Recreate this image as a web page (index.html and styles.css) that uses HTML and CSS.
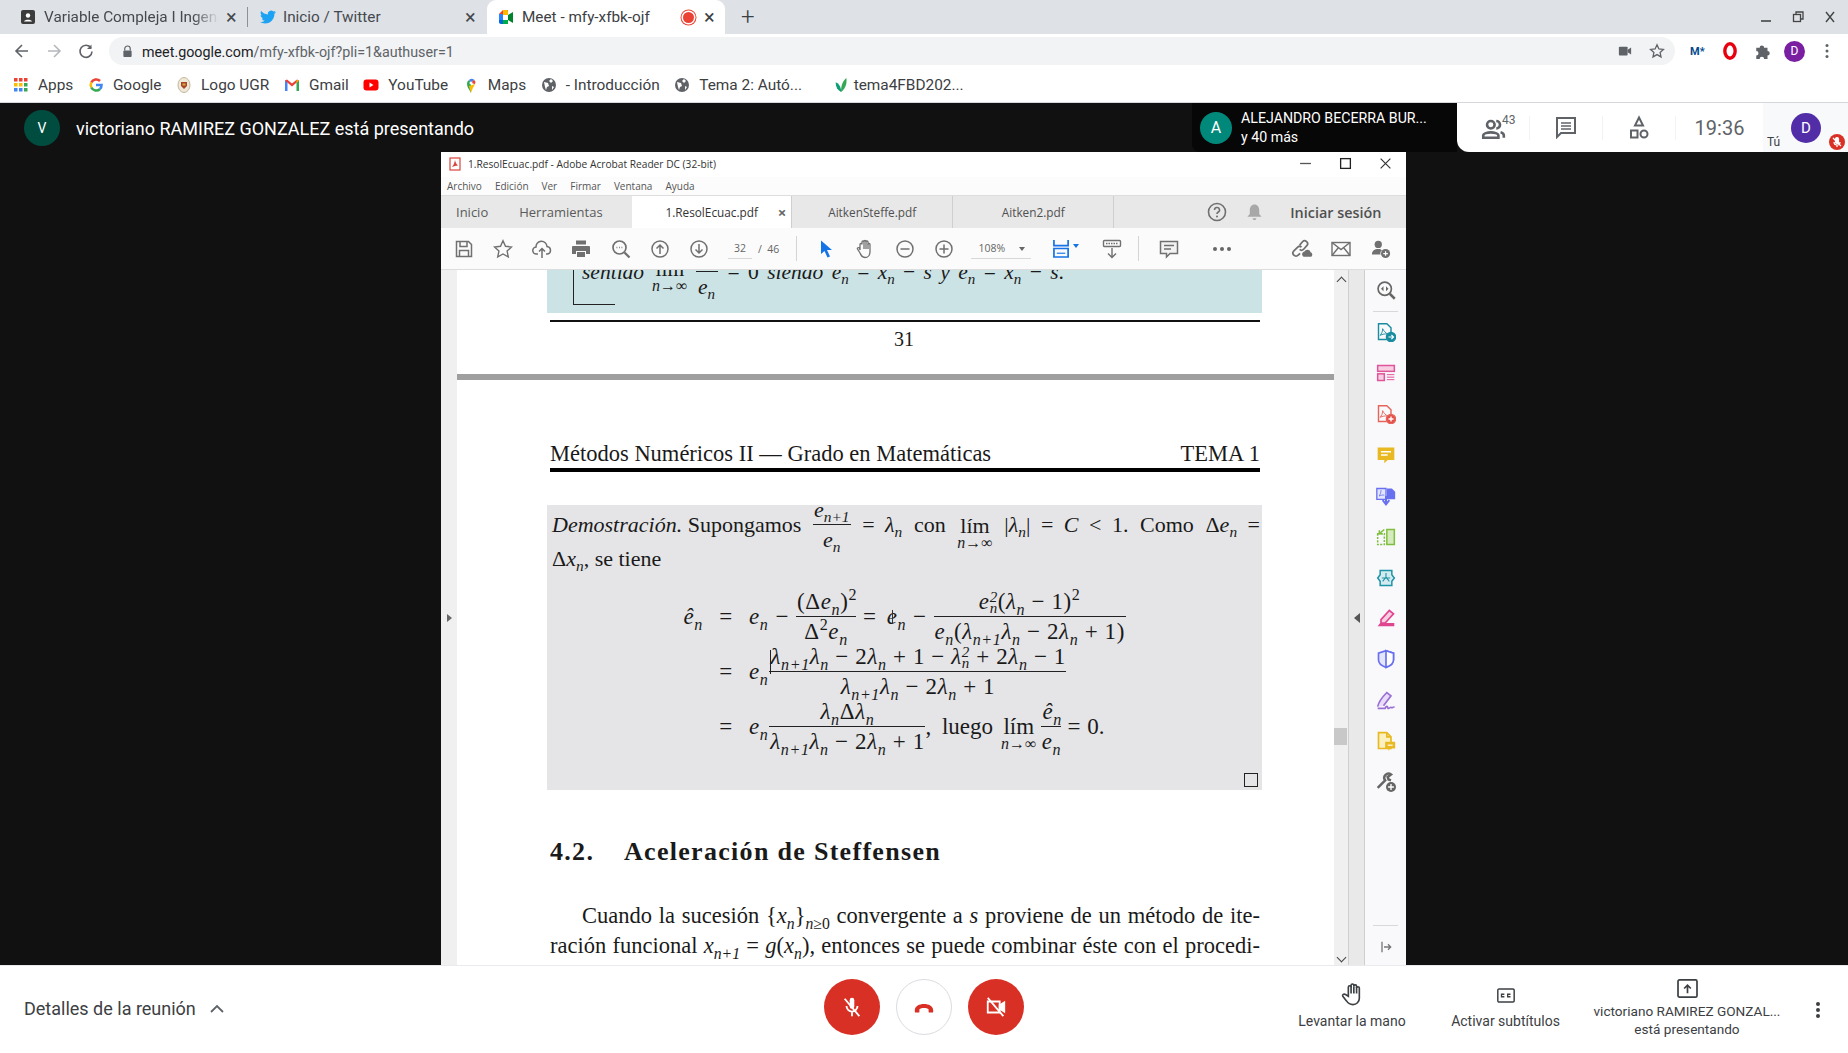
FILE: index.html
```html
<!DOCTYPE html>
<html>
<head>
<meta charset="utf-8">
<title>Meet - mfy-xfbk-ojf</title>
<link rel="stylesheet" href="styles.css">
</head>
<body>

<!-- chrome tabs -->
<div class="tabstrip">
  <div class="tab tab1">
    <svg class="fav" viewBox="0 0 16 16"><rect x="1" y="1" width="14" height="14" rx="2" fill="#3c3c3c"/><circle cx="8" cy="6.5" r="2.2" fill="#fff"/><path d="M4 12.5c.5-2.5 7.5-2.5 8 0z" fill="#fff"/></svg>
    <span class="tab-title fade">Variable Compleja I Ingeni</span>
    <span class="tab-x">×</span>
  </div>
  <div class="tab-sep"></div>
  <div class="tab tab2">
    <svg class="fav" viewBox="0 0 24 24"><path fill="#1da1f2" d="M23.95 4.57a10 10 0 0 1-2.82.77 4.96 4.96 0 0 0 2.16-2.72c-.95.55-2 .95-3.12 1.17a4.92 4.92 0 0 0-8.38 4.48C7.69 8.1 4.07 6.13 1.64 3.16a4.82 4.82 0 0 0-.67 2.48c0 1.71.87 3.2 2.18 4.09a4.9 4.9 0 0 1-2.23-.61v.06c0 2.39 1.7 4.38 3.95 4.83a5 5 0 0 1-2.21.08 4.94 4.94 0 0 0 4.6 3.42A9.87 9.87 0 0 1 0 19.54a14 14 0 0 0 7.56 2.21c9.05 0 14-7.5 14-13.98 0-.21 0-.42-.02-.63A9.94 9.94 0 0 0 24 4.59z"/></svg>
    <span class="tab-title">Inicio / Twitter</span>
    <span class="tab-x">×</span>
  </div>
  <div class="tab tab3">
    <svg class="fav" viewBox="0 0 16 16"><path d="M1 5l4-4h5v5H1z" fill="#ea4335"/><path d="M1 5h4v6H1z" fill="#2684fc"/><path d="M1 11h4v4H3a2 2 0 0 1-2-2z" fill="#0066da"/><path d="M5 11h5v4H5z" fill="#00ac47"/><path d="M5 1h4a1 1 0 0 1 1 1v4H5z" fill="#ffba00"/><path d="M10 6v5l5 3V3z" fill="#00832d"/></svg>
    <span class="tab-title dark">Meet - mfy-xfbk-ojf</span>
    <span class="rec"></span>
    <span class="tab-x dark">×</span>
  </div>
  <span class="tab-plus">+</span>
  <div class="win-btns">
    <svg viewBox="0 0 12 12"><path d="M1 10h10" stroke="#444" stroke-width="1.6"/></svg>
    <svg viewBox="0 0 12 12" fill="none" stroke="#444" stroke-width="1.3"><path d="M4 3V1h7v7H9"/><rect x="1.5" y="3.5" width="7" height="7"/></svg>
    <svg viewBox="0 0 12 12"><path d="M2 1l8 10M10 1L2 11" stroke="#444" stroke-width="1.4"/></svg>
  </div>
</div>

<!-- address bar -->
<div class="addressrow">
  <svg class="nav" viewBox="0 0 16 16" fill="none" stroke="#5f6368" stroke-width="1.6"><path d="M14 8H2.5M8 2L2 8l6 6"/></svg>
  <svg class="nav" viewBox="0 0 16 16" fill="none" stroke="#b5b8bc" stroke-width="1.6"><path d="M2 8h11.5M8 2l6 6-6 6"/></svg>
  <svg class="nav" viewBox="0 0 16 16" fill="none" stroke="#5f6368" stroke-width="1.6"><path d="M13 5a6 6 0 1 0 1 3.5"/><path d="M13.5 1.5V6H9" fill="#5f6368" stroke="none"/></svg>
  <div class="omnibox">
    <svg class="lock" viewBox="0 0 12 14"><path d="M3 6V4a3 3 0 0 1 6 0v2" fill="none" stroke="#5f6368" stroke-width="1.3"/><rect x="1.5" y="6" width="9" height="7" rx="1" fill="#5f6368"/></svg>
    <span class="url"><b>meet.google.com</b>/mfy-xfbk-ojf?pli=1&amp;authuser=1</span>
    <svg class="omni-cam" viewBox="0 0 16 12"><rect x="1" y="1" width="10" height="10" rx="1" fill="#5f6368"/><path d="M11 4.5l4-2.5v8l-4-2.5z" fill="#5f6368"/></svg>
    <svg class="omni-star" viewBox="0 0 16 16"><path d="M8 1.8l1.900 4.100 4.500.5-3.300 3 .9 4.500L8 11.600l-4 2.300.9-4.500-3.300-3 4.500-.5z" fill="none" stroke="#5f6368" stroke-width="1.3"/></svg>
  </div>
  <div class="exts">
    <span class="ext-m">M*</span>
    <svg class="ext" viewBox="0 0 16 16"><ellipse cx="8" cy="8" rx="4.6" ry="6.4" fill="none" stroke="#e8000f" stroke-width="3"/></svg>
    <svg class="ext" viewBox="0 0 16 16"><path d="M2 5h3a2 2 0 1 1 4 0h3v3a2 2 0 1 1 0 4v3H9a2 2 0 1 0-4 0H2v-3a2 2 0 1 0 0-4z" fill="#5f6368"/></svg>
    <span class="avatar-d">D</span>
    <svg class="ext kebab" viewBox="0 0 4 16"><circle cx="2" cy="2.5" r="1.5" fill="#5f6368"/><circle cx="2" cy="8" r="1.5" fill="#5f6368"/><circle cx="2" cy="13.5" r="1.5" fill="#5f6368"/></svg>
  </div>
</div>

<!-- bookmarks -->
<div class="bookmarks">
  <div class="bm">
    <svg class="bm-ico" viewBox="0 0 16 16"><g fill="#ea4335"><rect x="1" y="1" width="3.5" height="3.5"/><rect x="6" y="1" width="3.5" height="3.5"/><rect x="11" y="1" width="3.5" height="3.5"/></g><g fill="#fbbc05"><rect x="1" y="6" width="3.5" height="3.5"/><rect x="6" y="6" width="3.5" height="3.5"/></g><rect x="11" y="6" width="3.5" height="3.5" fill="#34a853"/><g fill="#4285f4"><rect x="1" y="11" width="3.5" height="3.5"/><rect x="6" y="11" width="3.5" height="3.5"/></g><rect x="11" y="11" width="3.5" height="3.5" fill="#34a853"/></svg>
    Apps
  </div>
  <div class="bm">
    <svg class="bm-ico" viewBox="0 0 16 16" fill="none" stroke-width="2.6"><path d="M3.3 5.500A5.500 5.500 0 0 1 12 4" stroke="#ea4335"/><path d="M3.3 5.500a5.500 5.500 0 0 0 0 5" stroke="#fbbc05"/><path d="M3.3 10.500A5.500 5.500 0 0 0 12 12" stroke="#34a853"/><path d="M12 12c1.200-1 1.500-2.500 1.500-4H8" stroke="#4285f4"/></svg>
    Google
  </div>
  <div class="bm">
    <svg class="bm-ico" viewBox="0 0 16 16"><ellipse cx="8" cy="8" rx="6" ry="7.5" fill="#eee8d8" stroke="#c4b898"/><path d="M5 5h6v4l-3 3-3-3z" fill="#a8442e"/><path d="M6.5 6.5h3v2h-3z" fill="#d9a93a"/></svg>
    Logo UGR
  </div>
  <div class="bm">
    <svg class="bm-ico" viewBox="0 0 16 16"><path d="M1 14V3.5L3.5 3V14z" fill="#4285f4"/><path d="M12.5 14V3l2.5.5V14z" fill="#34a853"/><path d="M1 3.5l2-1 5 4 5-4 2 1-7 6z" fill="#ea4335"/><path d="M15 3.5L12.5 6V3z" fill="#fbbc05"/></svg>
    Gmail
  </div>
  <div class="bm">
    <svg class="bm-ico" viewBox="0 0 16 16"><rect x="0.5" y="2.5" width="15" height="11" rx="3" fill="#f00"/><path d="M6.5 5.500v5l4-2.500z" fill="#fff"/></svg>
    YouTube
  </div>
  <div class="bm">
    <svg class="bm-ico" viewBox="0 0 16 16"><path d="M8 16c-1-3-4-5-4-9.500a4 4 0 0 1 2-3.500l2 3z" fill="#34a853"/><path d="M6 3a4.200 4.200 0 0 1 5-.5L8 6z" fill="#4285f4"/><path d="M11 2.500A4.200 4.200 0 0 1 12 7L8 6z" fill="#ea4335"/><path d="M12 7c-.2 1-2.500 4-4 9l-2-7z" fill="#fbbc05"/><circle cx="8" cy="6" r="1.5" fill="#fff"/></svg>
    Maps
  </div>
  <div class="bm">
    <svg class="bm-ico" viewBox="0 0 16 16"><circle cx="8" cy="8" r="7" fill="#5f6368"/><path d="M3 5l4 1 1 3-2 1-1 3-1-3zM10 2l2 2-2 2-2-2zM11 9l2 1-2 3z" fill="#fff"/></svg>
    - Introducción
  </div>
  <div class="bm">
    <svg class="bm-ico" viewBox="0 0 16 16"><circle cx="8" cy="8" r="7" fill="#5f6368"/><path d="M3 5l4 1 1 3-2 1-1 3-1-3zM10 2l2 2-2 2-2-2zM11 9l2 1-2 3z" fill="#fff"/></svg>
    Tema 2: Autó...
  </div>
  <div class="bm bm-last">
    <svg class="bm-ico" viewBox="0 0 16 18"><path d="M8 17C4 15 2 11 2 6c3 1 5 4 6 8z" fill="#0f9d77"/><path d="M8 17c0-6 1-12 6-16 1 6-1 12-6 16z" fill="#34a853"/></svg>
    tema4FBD202...
  </div>
</div>

<!-- meet top bar -->
<div class="meetbar">
  <span class="avatar-v">V</span>
  <span class="presenting">victoriano RAMIREZ GONZALEZ está presentando</span>
  <div class="speaker">
    <span class="avatar-a">A</span>
    <div class="speaker-names">
      <span>ALEJANDRO BECERRA BUR...</span>
      <span>y 40 más</span>
    </div>
  </div>
  <div class="meetpanel">
    <div class="mp-cell mp-people">
      <svg viewBox="0 0 24 20" fill="none" stroke="#5f6368" stroke-width="2.4"><circle cx="10" cy="7" r="3.5"/><path d="M3 19v-2c0-2 4-3 7-3s7 1 7 3v2z"/><path d="M15 3.500a3.500 3.500 0 0 1 0 7M19 14c2 .5 3 1.500 3 3v2"/></svg>
      <span class="mp-count">43</span>
    </div>
    <div class="mp-cell mp-chat">
      <svg viewBox="0 0 20 22" fill="none" stroke="#5f6368" stroke-width="2"><path d="M1 1h18v15H5l-4 4z"/><path d="M5 6h10M5 9h10M5 12h10" stroke-width="1.6"/></svg>
    </div>
    <div class="mp-cell mp-shapes">
      <svg viewBox="0 0 20 24" fill="none" stroke="#5f6368" stroke-width="2"><path d="M10 2l4 8H6z"/><rect x="2" y="15" width="6.5" height="7"/><circle cx="15" cy="18.5" r="3.5"/></svg>
    </div>
    <div class="mp-time">19:36</div>
    <div class="mp-self">
      <span class="tu">Tú</span>
      <span class="avatar-self">D</span>
      <span class="mic-badge">
        <svg viewBox="0 0 12 12" fill="none" stroke="#fff" stroke-width="1.2"><rect x="4.5" y="1.5" width="3" height="6" rx="1.5" fill="#fff"/><path d="M3 6a3 3 0 0 0 6 0M6 9v2M2 2l8 8"/></svg>
      </span>
    </div>
  </div>
</div>

<!-- shared window -->
<div class="stage">
  <div class="acro">
    <div class="acro-title">
      <svg class="pdf-ico" viewBox="0 0 12 14"><rect x="1" y="1" width="10" height="12" fill="#fff" stroke="#d9453c" stroke-width="1.2"/><path d="M6 3c-.5 3-1.500 5-3 7 2-1 4-1.500 6-1.500C7.500 7.500 6.500 5.500 6 3z" fill="#d9453c"/></svg>
      <span>1.ResolEcuac.pdf - Adobe Acrobat Reader DC (32-bit)</span>
      <div class="acro-winbtns">
        <svg viewBox="0 0 12 12"><path d="M1 6h10" stroke="#555" stroke-width="1.2"/></svg>
        <svg viewBox="0 0 12 12"><rect x="1.5" y="1.5" width="9" height="9" fill="none" stroke="#222" stroke-width="1.2"/></svg>
        <svg viewBox="0 0 12 12"><path d="M1.5 1.500l9 9M10.500 1.500l-9 9" stroke="#333" stroke-width="1.1"/></svg>
      </div>
    </div>
    <div class="acro-menu">
      <span>Archivo</span><span>Edición</span><span>Ver</span><span>Firmar</span><span>Ventana</span><span>Ayuda</span>
    </div>
    <div class="acro-tabs">
      <span class="at-link at-home">Inicio</span>
      <span class="at-link at-tools">Herramientas</span>
      <div class="at-tab at-active">1.ResolEcuac.pdf<span class="at-x">×</span></div>
      <div class="at-tab">AitkenSteffe.pdf</div>
      <div class="at-tab">Aitken2.pdf</div>
      <svg class="at-help" viewBox="0 0 20 20"><circle cx="10" cy="10" r="8.5" fill="none" stroke="#707070" stroke-width="1.6"/><path d="M7.5 8a2.500 2.500 0 1 1 3.500 2.300c-.7.4-1 .8-1 1.700" fill="none" stroke="#707070" stroke-width="1.6"/><circle cx="10" cy="14.5" r="1" fill="#707070"/></svg>
      <svg class="at-bell" viewBox="0 0 18 20"><path d="M9 1.500c-3 0-5 2.500-5 6v4l-2.500 3h15L14 11.500v-4c0-3.500-2-6-5-6zM7 16h4a2 2 0 0 1-4 0z" fill="#a8a8a8"/></svg>
      <span class="at-login">Iniciar sesión</span>
    </div>
    <div class="acro-tools">
      <svg class="tb" viewBox="0 0 20 20" fill="none" stroke="#707070" stroke-width="1.5"><path d="M2.5 2.500h12l3 3v12h-15z"/><path d="M6 2.500v5h7v-5M5.500 17.500v-6h9v6"/></svg>
      <svg class="tb" viewBox="0 0 20 20" fill="none" stroke="#707070" stroke-width="1.4"><path d="M10 1.800l2.500 5.500 6 .7-4.400 4.100 1.200 5.900-5.300-3-5.300 3 1.200-5.900L1.500 8l6-.7z"/></svg>
      <svg class="tb" viewBox="0 0 20 20" fill="none" stroke="#707070" stroke-width="1.5"><path d="M6 15H4.500a3.500 3.500 0 0 1-.5-7 5.500 5.500 0 0 1 11-.5 3.800 3.800 0 0 1 .5 7.500H14"/><path d="M10 19v-9M7 12.500l3-3 3 3"/></svg>
      <svg class="tb" viewBox="0 0 20 20" fill="#707070"><rect x="5" y="1.5" width="10" height="4"/><path d="M2 7h16a1 1 0 0 1 1 1v7h-4v-3H5v3H1V8a1 1 0 0 1 1-1z"/><rect x="6" y="13" width="8" height="5"/></svg>
      <svg class="tb" viewBox="0 0 20 20" fill="none" stroke="#707070" stroke-width="1.7"><circle cx="8.5" cy="8.5" r="6.5"/><path d="M13.500 13.500l5 5" stroke-width="2.2"/><path d="M5.500 8.500h.8M8 8.500h.8M10.500 8.500h.8"/></svg>
      <svg class="tb" viewBox="0 0 20 20" fill="none" stroke="#707070" stroke-width="1.5"><circle cx="10" cy="10" r="8"/><path d="M10 15V6M6.500 9.500L10 6l3.500 3.500"/></svg>
      <svg class="tb" viewBox="0 0 20 20" fill="none" stroke="#707070" stroke-width="1.5"><circle cx="10" cy="10" r="8"/><path d="M10 5v9M6.500 10.500L10 14l3.500-3.500"/></svg>
      <span class="tb-page">32</span>
      <span class="tb-pages">/ &nbsp;46</span>
      <span class="tb-div"></span>
      <svg class="tb tb-cursor" viewBox="0 0 20 20"><path d="M5 1.500l11 9.500h-5l3 6.500-2.500 1-3-6.500L5 15z" fill="#1473e6"/></svg>
      <svg class="tb" viewBox="0 0 20 20" fill="none" stroke="#707070" stroke-width="1.3"><path d="M5 11V5.500a1 1 0 0 1 2 0V3a1 1 0 0 1 2 0v-.5a1 1 0 0 1 2 0V3a1 1 0 0 1 2 0v2.500a1 1 0 0 1 2 0V13c0 3-2 5.500-5 5.500S6.500 17 5 14l-2.500-4c-.5-1 1-2 2-1z"/><path d="M9 3v7M11 2.500V10M13 5v5"/></svg>
      <svg class="tb" viewBox="0 0 20 20" fill="none" stroke="#707070" stroke-width="1.5"><circle cx="10" cy="10" r="8"/><path d="M5.500 10h9"/></svg>
      <svg class="tb" viewBox="0 0 20 20" fill="none" stroke="#707070" stroke-width="1.5"><circle cx="10" cy="10" r="8"/><path d="M5.500 10h9M10 5.500v9"/></svg>
      <span class="tb-zoom">108%<i class="caret"></i></span>
      <svg class="tb-fit" viewBox="0 0 18 20" fill="none" stroke="#1473e6" stroke-width="1.8"><path d="M1 1v6h15V1M1 19v-9h15v9z"/><path d="M4 15h9" stroke-width="1.2"/></svg>
      <i class="caret caret-blue"></i>
      <svg class="tb tb-keys" viewBox="0 0 20 20" fill="none" stroke="#707070" stroke-width="1.4"><rect x="1.5" y="1.5" width="17" height="6" rx="1"/><path d="M4 4.500h12" stroke-dasharray="1.5 1"/><path d="M10 9v9.500M6 14.500l4 4 4-4"/></svg>
      <span class="tb-div tb-div2"></span>
      <svg class="tb tb-comment" viewBox="0 0 20 20" fill="#f2f2f2" stroke="#707070" stroke-width="1.5"><path d="M1.500 2.500h17v12h-7.500l-3.500 3.500v-3.500h-6z"/><path d="M5 6.500h10M5 10h7" fill="none"/></svg>
      <span class="tb-dots"><i></i><i></i><i></i></span>
      <svg class="tb tb-link" viewBox="0 0 24 20" fill="none" stroke="#707070" stroke-width="1.8"><path d="M9 6l3-3.500a3 3 0 0 1 4.500 4L13 10.500a3 3 0 0 1-4 0"/><path d="M11 8a3 3 0 0 0-4 0l-4 4a3 3 0 0 0 4.500 4.500l2-2"/><path d="M13 18a3 3 0 0 1 1-5.500 3.500 3.500 0 0 1 6.500 1A2.500 2.500 0 0 1 21 18z" fill="#707070" stroke="none"/></svg>
      <svg class="tb" viewBox="0 0 20 16" fill="none" stroke="#707070" stroke-width="1.4"><rect x="1" y="1.5" width="18" height="13"/><path d="M1 1.500l9 7 9-7M1 14.500l6.500-8M19 14.500l-6.500-8"/></svg>
      <svg class="tb" viewBox="0 0 22 20"><circle cx="8" cy="5" r="4" fill="#707070"/><path d="M1 16c0-4 3-6 7-6 2 0 3 .5 4 1.500-1.500 1-2 3-1.500 4.500z" fill="#707070"/><circle cx="16" cy="15" r="5" fill="#707070"/><path d="M13.500 15h5M16 12.500v5" stroke="#fff" stroke-width="1.3"/></svg>
    </div>

    <div class="acro-body">
      <div class="gutter"><i class="arrow-right"></i></div>

      <div class="page">
        <div class="thm-box">
          <span class="bracket"></span>
          <div class="thm-line">
            <i>sentido</i>
            <span class="lim lim-thm"><span>lím</span><small><i>n</i>→∞</small></span>
            <span class="frac frac-thm"><span class="num">&nbsp;</span><span class="den"><i>e<sub>n</sub></i></span></span>
            <span class="thm-rest">= 0 <i>siendo e<sub>n</sub></i> = <i>x<sub>n</sub></i> − <i>s y e<sub>n</sub></i> = <i>x<sub>n</sub></i> − <i>s</i>.</span>
          </div>
        </div>
        <div class="pg-foot">
          <div class="rule-thin"></div>
          <div class="pg-num">31</div>
        </div>
        <div class="pg-gap"></div>
        <div class="pg-head">
          <span>Métodos Numéricos II — Grado en Matemáticas</span>
          <span>TEMA 1</span>
        </div>
        <div class="rule-head"></div>

        <div class="proof">
          <div class="proof-line">
            <span><i>Demostración.</i> Supongamos</span>
            <span class="frac"><span class="num"><i>e<sub>n+1</sub></i></span><span class="den"><i>e<sub>n</sub></i></span></span>
            <span class="wide">= <i>λ<sub>n</sub></i></span>
            <span>con</span>
            <span class="lim"><span>lím</span><small><i>n</i>→∞</small></span>
            <span class="wide">|<i>λ<sub>n</sub></i>| = <i>C</i> &lt; 1.</span>
            <span>Como</span>
            <span class="wide">Δ<i>e<sub>n</sub></i> =</span>
          </div>
          <div class="proof-line2">Δ<i>x<sub>n</sub></i>, se tiene</div>

          <div class="eqs">
            <div class="eq-l"><i>ê<sub>n</sub></i></div>
            <div class="eq-m">=</div>
            <div class="eq-r eq-wide">
              <i>e<sub>n</sub></i> −
              <span class="frac frac-a"><span class="num">(Δ<i>e<sub>n</sub></i>)<sup>2</sup></span><span class="den">Δ<sup>2</sup><i>e<sub>n</sub></i></span></span>
              = <i class="en2">e<sub>n</sub></i> −
              <span class="frac frac-b"><span class="num"><i>e<span class="supsub"><sup>2</sup><sub>n</sub></span></i>(<i>λ<sub>n</sub></i> − 1)<sup>2</sup></span><span class="den"><i>e<sub>n</sub></i>(<i>λ<sub>n+1</sub>λ<sub>n</sub></i> − 2<i>λ<sub>n</sub></i> + 1)</span></span>
            </div>
            <div class="eq-l"></div>
            <div class="eq-m">=</div>
            <div class="eq-r">
              <i>e<sub>n</sub></i>
              <span class="frac frac-c"><span class="num"><i>λ<sub>n+1</sub>λ<sub>n</sub></i> − 2<i>λ<sub>n</sub></i> + 1 − <i>λ<span class="supsub"><sup>2</sup><sub>n</sub></span></i> + 2<i>λ<sub>n</sub></i> − 1</span><span class="den"><i>λ<sub>n+1</sub>λ<sub>n</sub></i> − 2<i>λ<sub>n</sub></i> + 1</span></span>
            </div>
            <div class="eq-l"></div>
            <div class="eq-m">=</div>
            <div class="eq-r">
              <i>e<sub>n</sub></i>
              <span class="frac frac-d"><span class="num"><i>λ<sub>n</sub></i>Δ<i>λ<sub>n</sub></i></span><span class="den"><i>λ<sub>n+1</sub>λ<sub>n</sub></i> − 2<i>λ<sub>n</sub></i> + 1</span></span>
              <span class="luego">, luego</span>
              <span class="lim"><span>lím</span><small><i>n</i>→∞</small></span>
              <span class="frac frac-e"><span class="num"><i>ê<sub>n</sub></i></span><span class="den"><i>e<sub>n</sub></i></span></span>
              <span class="eq-end">= 0.</span>
            </div>
          </div>
          <span class="qed"></span>
          <span class="ibeam"></span>
          <span class="caret-line"></span>
        </div>

        <h2 class="section"><span>4.2.</span>Aceleración de Steffensen</h2>
        <p class="para para-first">Cuando la sucesión {<i>x<sub>n</sub></i>}<sub><i>n</i>≥0</sub> convergente a <i>s</i> proviene de un método de ite-</p>
        <p class="para">ración funcional <i>x<sub>n+1</sub></i> = <i>g</i>(<i>x<sub>n</sub></i>), entonces se puede combinar éste con el procedi-</p>
      </div>

      <div class="scroll">
        <i class="chev chev-up"></i>
        <span class="thumb"></span>
        <i class="chev chev-down"></i>
      </div>
      <div class="handle"><i class="arrow-left"></i></div>

      <div class="tools">
        <svg class="tl" viewBox="0 0 24 24" fill="none" stroke="#666" stroke-width="2"><circle cx="10.5" cy="10.5" r="8"/><path d="M16.500 16.500l6 6" stroke-width="3"/><path d="M9 7.500l-3 3 3 3zM12 7.500l3 3-3 3z" fill="#666" stroke="none"/></svg>
        <div class="tl-sep"></div>
        <svg class="tl" viewBox="0 0 24 24" fill="none" stroke="#1a8ca0" stroke-width="1.7"><path d="M13 21H3V2h10l5 5v5"/><path d="M8 8c0 4-1.500 6-3 8 3-1.500 6-2 9-1.500-2.500-1.500-5-4-6-6.500z" stroke-width="1.1"/><circle cx="18" cy="18" r="5.5" fill="#1a8ca0"/><path d="M15 18h6M18.500 15.500L21 18l-2.500 2.500" stroke="#fff" stroke-width="1.4"/></svg>
        <svg class="tl" viewBox="0 0 24 24" fill="none" stroke="#e0559a" stroke-width="1.8"><rect x="2" y="3" width="20" height="7" fill="#f8cfe2"/><rect x="2" y="13" width="8" height="8" fill="#f8cfe2"/><path d="M13 14h9M13 17h9M13 20h9" stroke-width="1.2"/></svg>
        <svg class="tl" viewBox="0 0 24 24" fill="none" stroke="#e5655a" stroke-width="1.7"><path d="M13 21H3V2h10l5 5v5"/><path d="M8 8c0 4-1.500 6-3 8 3-1.500 6-2 9-1.500-2.500-1.500-5-4-6-6.500z" stroke-width="1.1"/><circle cx="18" cy="18" r="5.5" fill="#e5504a"/><path d="M15 18h6M18 15v6" stroke="#fff" stroke-width="1.6"/></svg>
        <svg class="tl" viewBox="0 0 24 24"><path d="M2 3h20v15h-8l-4 4v-4H2z" fill="#e8b923"/><path d="M6 8h12M6 12h8" stroke="#fff" stroke-width="1.8"/></svg>
        <svg class="tl" viewBox="0 0 24 24"><path d="M1 3h11v13H1z" fill="#e4e6fd" stroke="#6870f0" stroke-width="1.6"/><path d="M13 3h6l4 4v9H13z" fill="#6870f0"/><path d="M12 12v8M8 17l4 5 4-5" stroke="#6870f0" stroke-width="2.4" fill="none"/><path d="M6 5c0 3-1 5-2 7 2-1 4-1.500 6-1" fill="none" stroke="#6870f0"/></svg>
        <svg class="tl" viewBox="0 0 24 24" fill="none" stroke="#7fbf3f" stroke-width="1.8"><rect x="13" y="3" width="9" height="18" fill="#d5ebbf"/><path d="M2 8v13h8V8z" stroke-dasharray="2.5 1.5"/><path d="M10 3L4 8M4 4v4h4"/></svg>
        <svg class="tl" viewBox="0 0 24 24" fill="none" stroke="#1f93a8" stroke-width="1.8"><path d="M5 3h14v5l3 4-3 4v5H5v-5l-3-4 3-4z" fill="#d4ecf0"/><path d="M12 6v5M12 11l-4 5M12 11l4 5M7 12h10" stroke-width="1.3"/></svg>
        <svg class="tl" viewBox="0 0 24 24"><path d="M6 14L16 3l5 4-10 11H6z" fill="#f8cfe2" stroke="#e0458f" stroke-width="2"/><path d="M2 22l3-4h17v4z" fill="#e0458f"/></svg>
        <svg class="tl" viewBox="0 0 24 24"><path d="M12 2l9 3v8c0 4-4 7.500-9 9-5-1.500-9-5-9-9V5z" fill="#e4e6fd" stroke="#6870f0" stroke-width="2"/><path d="M12 2l9 3v8c0 4-4 7.500-9 9z" fill="#fff" stroke="#6870f0" stroke-width="2"/></svg>
        <svg class="tl" viewBox="0 0 24 24" fill="none" stroke="#9a6fd4" stroke-width="2"><path d="M2 20c1-5 6-12 11-17l5 4-9 12" fill="#e8dcf8"/><path d="M2 22h9c1-3 3-3 3-1s2 1 3 0 1 1 3 0 2 0 2 0"/></svg>
        <svg class="tl" viewBox="0 0 24 24"><path d="M3 2h10l5 5v14H3z" fill="#fbf0c0" stroke="#e8b923" stroke-width="2"/><path d="M13 2v5h5" fill="none" stroke="#e8b923" stroke-width="2"/><path d="M11 13h12v8h-6l-2 3v-3h-4z" fill="#e8b923"/><path d="M14 17h6" stroke="#fff" stroke-width="1.4"/></svg>
        <svg class="tl" viewBox="0 0 24 24"><path d="M2 19L11 10a5 5 0 0 1 7-7l-4 3 1 3 3 1" fill="none" stroke="#666" stroke-width="3"/><circle cx="18" cy="18" r="6" fill="#666"/><path d="M14.500 18h7M18 14.500v7" stroke="#fff" stroke-width="1.6"/></svg>
        <div class="tl-sep tl-sep-bottom"></div>
        <svg class="tl tl-collapse" viewBox="0 0 24 24" fill="none" stroke="#777" stroke-width="2"><path d="M6 4v16"/><path d="M9 12h10M15 8l4 4-4 4"/></svg>
      </div>
    </div>
  </div>
</div>

<!-- meet bottom bar -->
<div class="meetbottom">
  <div class="details">Detalles de la reunión
    <svg viewBox="0 0 14 9" fill="none" stroke="#5f6368" stroke-width="1.8"><path d="M1 8l6-6 6 6"/></svg>
  </div>
  <div class="callbtns">
    <span class="callbtn red">
      <svg viewBox="0 0 24 24" fill="none" stroke="#fff" stroke-width="2"><rect x="9.5" y="2" width="5" height="12" rx="2.5" fill="#fff" stroke="none"/><path d="M6 11a6 6 0 0 0 12 0M12 17v5M4 3l16 19"/></svg>
    </span>
    <span class="callbtn white">
      <svg viewBox="0 0 24 12"><path d="M2 9c0-9 20-9 20 0v1.500a1 1 0 0 1-1 1h-3a1 1 0 0 1-1-1V8C15 6 9 6 7 8v2.500a1 1 0 0 1-1 1H3a1 1 0 0 1-1-1z" fill="#d93025"/></svg>
    </span>
    <span class="callbtn red">
      <svg viewBox="0 0 24 24" fill="none" stroke="#fff" stroke-width="2"><path d="M3 6h13v12H3z"/><path d="M16 10l5-3v10l-5-3z" fill="#fff"/><path d="M3 2l17 20"/></svg>
    </span>
  </div>
  <div class="bottom-actions">
    <div class="action act-hand">
      <svg viewBox="0 0 24 26" fill="none" stroke="#3c4043" stroke-width="1.8"><path d="M8 15V5a1.500 1.500 0 0 1 3 0V3a1.500 1.500 0 0 1 3 0v1a1.500 1.500 0 0 1 3 0v2a1.500 1.500 0 0 1 3 0v11c0 4-3 7-7 7-3 0-5-1-7-4L2 15c-1-2 1-3 3-2z"/><path d="M11 4v8M14 4v8M17 5v7"/></svg>
      <span>Levantar la mano</span>
    </div>
    <div class="action act-cc">
      <svg viewBox="0 0 22 18" fill="none" stroke="#3c4043" stroke-width="1.8"><rect x="1" y="1" width="20" height="16" rx="1.5"/><path d="M9 7.500H5.500v3H9M16.500 7.500H13v3h3.500" stroke-width="1.6"/></svg>
      <span>Activar subtítulos</span>
    </div>
    <div class="action act-present">
      <svg viewBox="0 0 22 20" fill="none" stroke="#3c4043" stroke-width="1.8"><rect x="1" y="1" width="20" height="18" rx="1.5"/><path d="M11 15V7M7.500 10L11 6.500l3.500 3.500"/></svg>
      <span>victoriano RAMIREZ GONZAL...<br>está presentando</span>
    </div>
    <svg class="more" viewBox="0 0 4 18"><circle cx="2" cy="3" r="2" fill="#3c4043"/><circle cx="2" cy="9" r="2" fill="#3c4043"/><circle cx="2" cy="15" r="2" fill="#3c4043"/></svg>
  </div>
</div>

</body>
</html>
```

FILE: styles.css
```css
* {
box-sizing: border-box;
}
html, body {
margin: 0;
height: 100%;
}
body {
width: 1848px;
height: 1053px;
overflow: hidden;
display: flex;
flex-direction: column;
font-family: Roboto, "Liberation Sans", sans-serif;
color: #3c4043;
background: #111;
}
sub, sup {
line-height: 0;
font-size: 70%;
}

/* chrome tabs */
.tabstrip {
height: 34px;
flex: none;
background: #dee1e6;
display: flex;
align-items: center;
padding-left: 20px;
font-size: 15.3px;
}
.tab {
display: flex;
align-items: center;
height: 34px;
}
.fav {
width: 16px;
height: 16px;
flex: none;
}
.tab-title {
margin-left: 8px;
color: #45494e;
white-space: nowrap;
overflow: hidden;
}
.tab-title.dark {
color: #3c4043;
}
.fade {
-webkit-mask-image: linear-gradient(90deg, #000 85%, transparent);
mask-image: linear-gradient(90deg, #000 85%, transparent);
}
.tab-x {
font-size: 20px;
color: #45494e;
line-height: 1;
}
.tab-x.dark {
color: #3c4043;
}
.tab1 {
width: 227px;
}
.tab1 .tab-title {
width: 175px;
}
.tab1 .tab-x {
margin-left: 7px;
}
.tab-sep {
width: 1px;
height: 20px;
background: #8d9095;
}
.tab2 {
width: 239px;
padding-left: 12px;
}
.tab2 .tab-title {
width: 182px;
margin-left: 7px;
}
.tab3 {
width: 238px;
background: #fff;
border-radius: 9px 9px 0 0;
padding-left: 11px;
}
.tab3 .tab-title {
width: 161px;
margin-left: 8px;
}
.rec {
width: 11px;
height: 11px;
border-radius: 50%;
background: #ea4335;
box-shadow: 0 0 0 1.5px #fff, 0 0 0 2.5px #ea4335;
flex: none;
}
.tab3 .tab-x {
margin-left: 10px;
}
.tab-plus {
margin-left: 16px;
font-size: 24px;
font-weight: 300;
color: #3c4043;
line-height: 1;
}
.win-btns {
margin-left: auto;
margin-right: 12px;
display: flex;
gap: 20px;
}
.win-btns svg {
width: 12px;
height: 12px;
}

/* address bar */
.addressrow {
height: 34px;
flex: none;
background: #fff;
display: flex;
align-items: center;
padding-left: 14px;
}
.nav {
width: 16px;
height: 16px;
margin-right: 16px;
flex: none;
}
.omnibox {
margin-left: -1px;
width: 1566px;
height: 28px;
border-radius: 14px;
background: #f1f3f4;
display: flex;
align-items: center;
padding: 0 10px 0 13px;
}
.lock {
width: 11px;
height: 13px;
flex: none;
}
.url {
margin-left: 9px;
font-size: 14.3px;
color: #5f6368;
padding-top: 1px;
}
.url b {
font-weight: 400;
color: #202124;
}
.omni-cam {
margin-left: auto;
width: 14px;
height: 12px;
}
.omni-star {
margin-left: 17px;
width: 16px;
height: 16px;
}
.exts {
display: flex;
align-items: center;
margin-left: 15px;
}
.ext-m {
font-size: 11px;
font-weight: 700;
color: #034a8c;
width: 16px;
}
.ext {
width: 18px;
height: 18px;
margin-left: 15px;
}
.avatar-d {
width: 21px;
height: 21px;
border-radius: 50%;
background: #7b1fa2;
color: #fff;
font-size: 12px;
display: flex;
align-items: center;
justify-content: center;
margin-left: 12px;
}
.kebab {
width: 4px;
height: 16px;
margin-left: 20px;
}

/* bookmarks */
.bookmarks {
height: 35px;
flex: none;
background: #fff;
border-bottom: 1px solid #d5d7da;
display: flex;
align-items: center;
padding-left: 13px;
gap: 14.6px;
font-size: 15.4px;
color: #3c4043;
}
.bm {
display: flex;
align-items: center;
gap: 9px;
white-space: nowrap;
}
.bm-ico {
width: 16px;
height: 16px;
flex: none;
}
.bm-last {
margin-left: 16px;
gap: 5px;
}

/* meet top bar */
.meetbar {
height: 49px;
flex: none;
background: #111;
display: flex;
align-items: center;
padding-left: 24px;
position: relative;
z-index: 2;
}
.avatar-v {
width: 36px;
height: 36px;
border-radius: 50%;
background: #004d40;
color: #fff;
font-size: 14px;
display: flex;
align-items: center;
justify-content: center;
}
.presenting {
margin-left: 16px;
font-size: 18px;
color: #fff;
white-space: nowrap;
padding-top: 1px;
}
.speaker {
margin-left: auto;
width: 265px;
height: 49px;
background: #070707;
border-radius: 0 0 0 8px;
display: flex;
align-items: center;
padding-left: 8px;
}
.avatar-a {
width: 32px;
height: 32px;
border-radius: 50%;
background: #00897b;
color: #fff;
font-size: 16px;
display: flex;
align-items: center;
justify-content: center;
flex: none;
}
.speaker-names {
margin-left: 9px;
display: flex;
flex-direction: column;
gap: 2px;
font-size: 14.2px;
line-height: 17px;
color: #fff;
white-space: nowrap;
}
.meetpanel {
width: 391px;
height: 49px;
background: #fff;
border-radius: 0 0 0 12px;
display: flex;
align-items: center;
}
.mp-cell {
width: 73px;
height: 24px;
border-right: 1px solid #f1f3f4;
display: flex;
align-items: center;
justify-content: center;
position: relative;
}
.mp-people svg {
width: 26px;
height: 22px;
}
.mp-count {
position: absolute;
left: 45px;
top: -3px;
font-size: 12px;
color: #5f6368;
}
.mp-chat svg {
width: 20px;
height: 22px;
}
.mp-shapes svg {
width: 20px;
height: 25px;
}
.mp-time {
width: 87px;
text-align: center;
font-size: 20px;
color: #5f6368;
}
.mp-self {
flex: 1;
align-self: stretch;
background: #f8f9fa;
position: relative;
display: flex;
align-items: center;
}
.tu {
position: absolute;
left: 4px;
bottom: 3px;
font-size: 12px;
color: #3c4043;
}
.avatar-self {
margin-left: 28px;
width: 30px;
height: 30px;
border-radius: 50%;
background: #512da8;
color: #fff;
font-size: 15px;
display: flex;
align-items: center;
justify-content: center;
}
.mic-badge {
position: absolute;
right: 3px;
bottom: 2px;
width: 16px;
height: 16px;
border-radius: 50%;
background: #d93025;
display: flex;
align-items: center;
justify-content: center;
}
.mic-badge svg {
width: 12px;
height: 12px;
}

/* shared window */
.stage {
height: 813px;
flex: none;
padding-left: 441px;
background: #111;
}
.acro {
width: 965px;
height: 813px;
background: #fff;
display: flex;
flex-direction: column;
font-family: "Open Sans", "Liberation Sans", sans-serif;
color: #444;
overflow: hidden;
}
.acro-title {
height: 25px;
flex: none;
display: flex;
align-items: center;
padding: 0 0 2px 8px;
font-size: 10.2px;
color: #333;
}
.pdf-ico {
width: 12px;
height: 14px;
margin-right: 7px;
}
.acro-winbtns {
margin-left: auto;
margin-right: 14px;
display: flex;
gap: 27px;
}
.acro-winbtns svg {
width: 13px;
height: 13px;
}
.acro-menu {
height: 19px;
flex: none;
display: flex;
align-items: center;
padding-left: 6px;
font-size: 10px;
color: #555;
background: #fcfcfc;
border-bottom: 1px solid #ddd;
}
.acro-menu span {
margin-right: 13px;
}
.acro-tabs {
height: 32px;
flex: none;
background: #e8e8e8;
display: flex;
align-items: center;
font-size: 13px;
color: #5a5a5a;
}
.at-link {
white-space: nowrap;
}
.at-home {
margin-left: 15px;
}
.at-tools {
margin-left: 31px;
width: 113px;
}
.at-tab {
width: 161px;
height: 32px;
display: flex;
align-items: center;
justify-content: center;
font-size: 11.8px;
color: #505050;
border-right: 1px solid #cfcfcf;
position: relative;
}
.at-active {
width: 160px;
background: #fff;
color: #333;
}
.at-x {
position: absolute;
right: 5px;
font-size: 15px;
font-weight: 700;
color: #666;
}
.at-help {
width: 20px;
height: 20px;
margin-left: 93px;
}
.at-bell {
width: 17px;
height: 19px;
margin-left: 19px;
}
.at-login {
margin-left: 27px;
font-weight: 600;
font-size: 14.4px;
color: #505050;
}
.acro-tools {
height: 42px;
flex: none;
display: flex;
align-items: center;
padding-left: 3px;
background: #fbfbfb;
border-bottom: 1px solid #ddd;
}
.tb {
width: 20px;
height: 20px;
margin: 0 9.65px;
flex: none;
}
.tb-page {
margin-left: 9px;
width: 24px;
text-align: center;
font-size: 10.5px;
color: #666;
border-bottom: 1px solid #d8d8d8;
line-height: 19px;
}
.tb-pages {
margin-left: 6px;
width: 20px;
white-space: nowrap;
font-size: 10.5px;
color: #666;
}
.tb-div {
width: 1px;
height: 25px;
background: #d5d5d5;
margin-left: 18px;
}
.tb-cursor {
margin-left: 19px;
}
.tb-zoom {
margin-left: 8px;
width: 60px;
font-size: 10.5px;
color: #666;
padding-left: 7px;
line-height: 19px;
border-bottom: 1px solid #d8d8d8;
position: relative;
}
.caret {
position: absolute;
right: 6px;
top: 8px;
border: 3px solid transparent;
border-top: 4px solid #666;
border-bottom: 0;
}
.tb-fit {
width: 17px;
height: 21px;
margin-left: 22px;
flex: none;
}
.caret-blue {
position: static;
margin-left: 3px;
margin-top: -6px;
border-top-color: #1473e6;
}
.tb-keys {
margin-left: 23px;
}
.tb-div2 {
margin-left: 6px;
}
.tb-comment {
margin-left: 20px;
}
.tb-dots {
margin-left: 24px;
display: flex;
gap: 3px;
}
.tb-dots i {
width: 4px;
height: 4px;
border-radius: 50%;
background: #666;
}
.tb-link {
margin-left: 60px;
width: 23px;
margin-right: 8px;
}
.acro-body {
flex: 1;
min-height: 0;
display: flex;
}
.gutter {
width: 16px;
flex: none;
background: #f0f0f0;
display: flex;
align-items: center;
justify-content: center;
}
.arrow-right {
border: 4px solid transparent;
border-left: 5px solid #666;
border-right: 0;
}
.arrow-left {
border: 5px solid transparent;
border-right: 6px solid #555;
border-left: 0;
}

/* the pdf page */
.page {
width: 877px;
flex: none;
background: #fff;
overflow: hidden;
padding-left: 93px;
padding-right: 74px;
font-family: "Liberation Serif", serif;
color: #1a1a1a;
font-size: 22px;
}
.thm-box {
margin-left: -3px;
width: 715px;
height: 43px;
background: #cce3e5;
position: relative;
overflow: hidden;
}
.bracket {
position: absolute;
left: 26px;
top: -5px;
width: 42px;
height: 40px;
border-left: 1px solid #222;
border-bottom: 1px solid #222;
}
.thm-line {
margin-top: -33px;
margin-left: 35px;
height: 70px;
display: flex;
align-items: center;
gap: 8px;
white-space: nowrap;
font-size: 21.5px;
}
.thm-rest {
word-spacing: 3px;
margin-left: 2px;
}
.lim {
display: inline-flex;
flex-direction: column;
align-items: center;
line-height: 22px;
padding-top: 17px;
}
.lim small {
font-size: 16px;
line-height: 12px;
}
.lim-thm {
padding-top: 5px;
}
.frac {
display: inline-flex;
flex-direction: column;
align-items: center;
vertical-align: middle;
}
.frac .num {
height: 29px;
line-height: 28px;
padding: 0 1px;
border-bottom: 1px solid #222;
align-self: stretch;
text-align: center;
white-space: nowrap;
}
.frac .den {
height: 29px;
line-height: 30px;
padding: 0 1px;
white-space: nowrap;
}
.frac-thm {
width: 22px;
}
.pg-foot {
padding-top: 7px;
}
.rule-thin {
height: 2px;
background: #111;
}
.pg-num {
height: 34px;
line-height: 34px;
text-align: center;
font-size: 20px;
margin-right: 2px;
}
.pg-gap {
height: 6px;
margin: 18px -74px 0 -93px;
background: #9f9f9f;
}
.pg-head {
margin-top: 60px;
height: 28px;
line-height: 28px;
display: flex;
justify-content: space-between;
font-size: 22.5px;
}
.rule-head {
height: 4px;
background: #000;
}
.proof {
margin: 33px 0 0 -3px;
width: 715px;
height: 285px;
background: #e5e5e7;
position: relative;
padding: 0 2px 0 5px;
}
.proof-line {
height: 40px;
display: flex;
align-items: center;
justify-content: space-between;
white-space: nowrap;
}
.wide {
word-spacing: 5px;
}
.proof-line .lim {
padding-top: 14px;
}
.proof-line2 {
height: 32px;
line-height: 28px;
}
.eqs {
display: grid;
grid-template-columns: 58px 46px auto;
grid-auto-rows: 55px;
align-items: center;
margin: 12px 0 0 93px;
font-size: 23px;
letter-spacing: 0.6px;
}
.eq-l {
text-align: right;
}
.eq-m {
text-align: center;
}
.eq-r {
display: flex;
align-items: center;
white-space: nowrap;
}
.eq-wide {
gap: 7px;
}
.en2 {
margin-left: 3px;
}
.supsub {
display: inline-flex;
flex-direction: column;
vertical-align: middle;
line-height: 11px;
font-size: 15px;
}
.supsub sup, .supsub sub {
font-size: 15px;
line-height: 11px;
}
.frac-a {
width: 60px;
}
.frac-b {
width: 192px;
}
.frac-c {
width: 297px;
margin-left: 1px;
}
.frac-d {
width: 156px;
margin-left: 1px;
}
.frac-e {
width: 20px;
margin-left: 5px;
}
.eq-r .lim {
padding-top: 12px;
margin-left: 8px;
letter-spacing: 0;
}
.luego {
word-spacing: 5px;
letter-spacing: 0;
}
.eq-end {
margin-left: 6px;
word-spacing: 1px;
letter-spacing: 0;
}
.qed {
position: absolute;
right: 4px;
bottom: 3px;
width: 14px;
height: 14px;
border: 1px solid #222;
}
.ibeam {
position: absolute;
left: 345px;
top: 105px;
width: 1px;
height: 14px;
background: #333;
}
.caret-line {
position: absolute;
left: 223px;
top: 145px;
width: 1px;
height: 24px;
background: #222;
}
.section {
margin: 45px 0 0 0;
height: 34px;
line-height: 34px;
font-size: 26px;
font-weight: 700;
letter-spacing: 1.3px;
white-space: nowrap;
}
.section span {
display: inline-block;
width: 74px;
}
.para {
margin: 0;
height: 30px;
line-height: 30px;
font-size: 22.5px;
text-align: justify;
text-align-last: justify;
}
.para-first {
margin-top: 32px;
padding-left: 32px;
}

/* scroll and tools rail */
.scroll {
width: 14px;
flex: none;
background: #f0f0f0;
display: flex;
flex-direction: column;
align-items: center;
position: relative;
}
.chev {
width: 7px;
height: 7px;
border-left: 1.5px solid #444;
border-top: 1.5px solid #444;
}
.chev-up {
transform: rotate(45deg);
margin-top: 8px;
}
.chev-down {
transform: rotate(225deg);
margin-top: auto;
margin-bottom: 4px;
}
.thumb {
position: absolute;
left: 0;
top: 458px;
width: 13px;
height: 17px;
background: #c8c8c8;
}
.handle {
width: 17px;
flex: none;
background: #e9e9e9;
border-left: 1px solid #cfcfcf;
border-right: 1px solid #cfcfcf;
display: flex;
align-items: center;
justify-content: center;
}
.tools {
flex: 1;
background: #f9f9fb;
display: flex;
flex-direction: column;
align-items: center;
}
.tl {
width: 20px;
height: 20px;
margin: 10.45px 0;
flex: none;
}
.tl-sep {
width: 25px;
height: 1px;
background: #d8d8d8;
}
.tl-sep-bottom {
margin-top: auto;
}
.tl-collapse {
width: 16px;
height: 16px;
margin: 13px 0 10px;
}

/* meet bottom bar */
.meetbottom {
height: 88px;
flex: none;
background: #fff;
border-top: 1px solid #e8eaed;
display: flex;
align-items: center;
position: relative;
}
.details {
margin-left: 24px;
font-size: 18px;
color: #3c4043;
display: flex;
align-items: center;
gap: 14px;
padding-bottom: 3px;
}
.details svg {
width: 14px;
height: 9px;
}
.callbtns {
position: absolute;
left: 824px;
top: 13px;
display: flex;
gap: 16px;
}
.callbtn {
width: 56px;
height: 56px;
border-radius: 50%;
display: flex;
align-items: center;
justify-content: center;
}
.callbtn.red {
background: #d93025;
}
.callbtn.white {
background: #fff;
border: 1px solid #dadce0;
}
.callbtn svg {
width: 22px;
height: 22px;
}
.callbtn.white svg {
height: 11px;
}
.bottom-actions {
margin-left: auto;
display: flex;
align-items: center;
height: 88px;
position: relative;
}
.action {
display: flex;
flex-direction: column;
align-items: center;
font-size: 14px;
line-height: 18px;
color: #3c4043;
text-align: center;
white-space: nowrap;
}
.act-hand {
width: 154px;
gap: 5px;
padding-bottom: 7px;
}
.act-hand svg {
width: 22px;
height: 25px;
}
.act-cc {
width: 153px;
gap: 9px;
padding-bottom: 2px;
}
.act-cc svg {
width: 18px;
height: 15px;
}
.act-present {
width: 210px;
gap: 4px;
padding-bottom: 2px;
font-size: 13.6px;
}
.act-present svg {
width: 21px;
height: 19px;
}
.more {
width: 4px;
height: 18px;
margin: 0 28px 0 24px;
}
```
